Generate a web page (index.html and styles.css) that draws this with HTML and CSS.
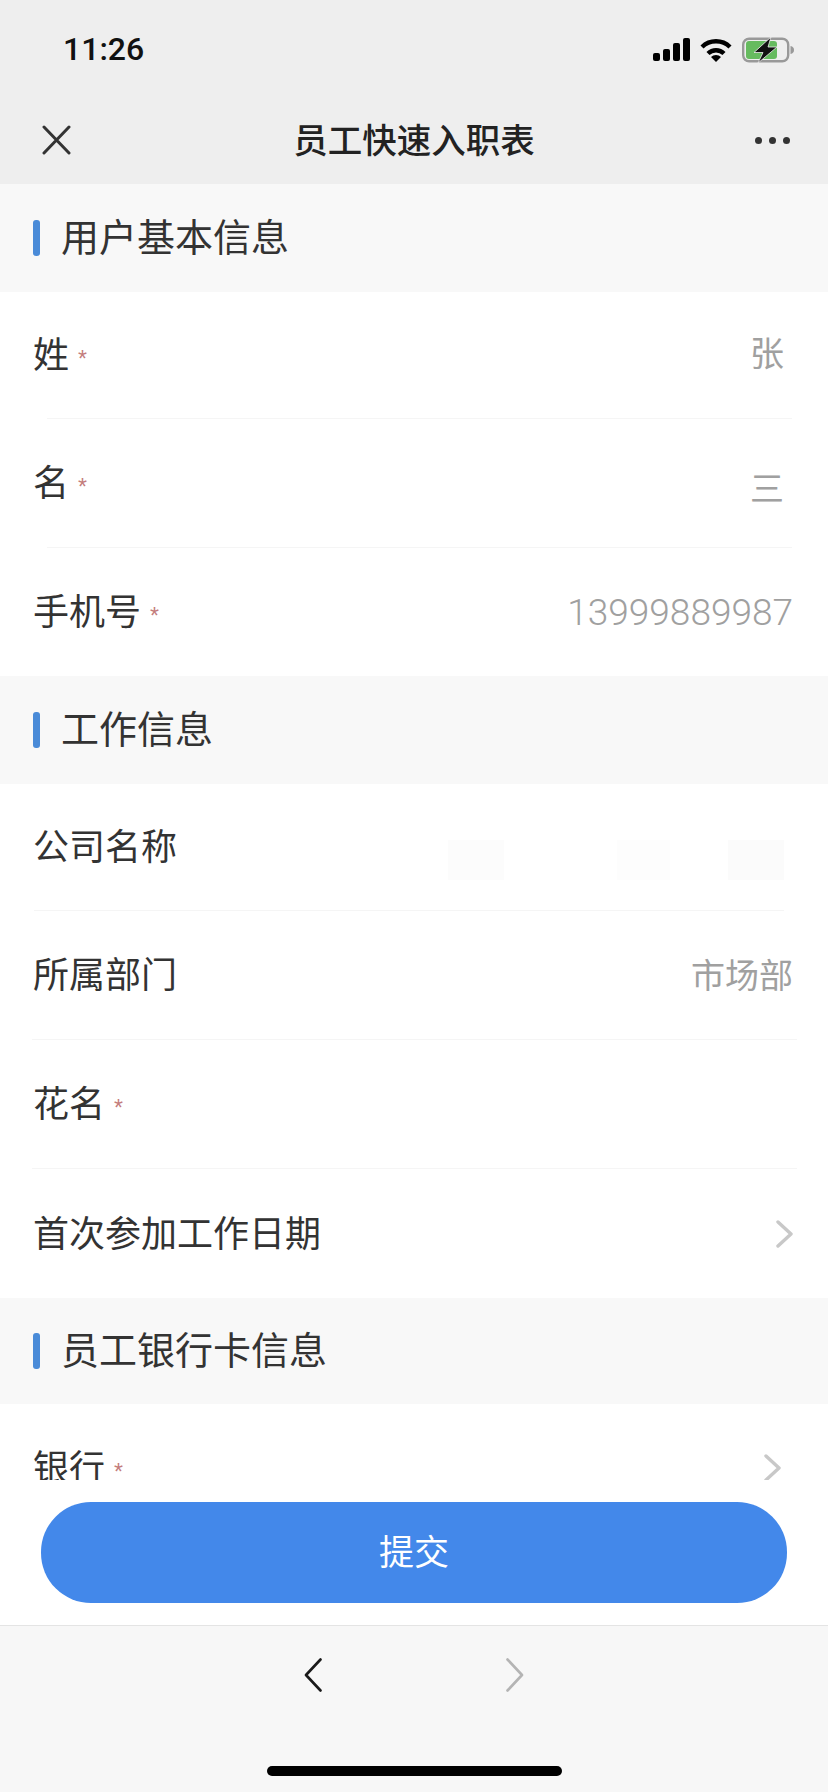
FILE: index.html
```html
<!DOCTYPE html>
<html lang="zh">
<head>
    <meta charset="utf-8">
    <title>员工快速入职表</title>
    <link rel="stylesheet" href="styles.css">
</head>
<body>
    <div class="page">
        <header class="top">
            <div class="status">
                <span class="time">11:26</span>
                <div class="status-icons">
                    <svg class="icon-signal" width="37" height="23" viewBox="0 0 37 23">
                        <rect x="0" y="15" width="7" height="8" rx="2"/>
                        <rect x="10" y="11" width="7" height="12" rx="2"/>
                        <rect x="20" y="5" width="7" height="18" rx="2"/>
                        <rect x="30" y="0" width="7" height="23" rx="2"/>
                    </svg>
                    <svg class="icon-wifi" width="32" height="24" viewBox="0 0 32 24">
                        <path d="M2 9 A20 20 0 0 1 30 9" fill="none" stroke="#000" stroke-width="4.4"/>
                        <path d="M8 15.5 A11.5 11.5 0 0 1 24 15.5" fill="none" stroke="#000" stroke-width="4.4"/>
                        <path d="M16 24 L11 19 A7 7 0 0 1 21 19 Z"/>
                    </svg>
                    <svg class="icon-battery" width="52" height="26" viewBox="0 0 52 26">
                        <rect x="1.2" y="1.7" width="45" height="22.6" rx="6" fill="none" stroke="#999" stroke-width="2.4"/>
                        <path d="M48.5 9 C51 9.5 52 11 52 13 C52 15 51 16.5 48.5 17 Z" fill="#999"/>
                        <rect x="4" y="4" width="31" height="18" rx="3" fill="#66bb5f"/>
                        <path d="M29 0 L12 15.500 H21 L16 26 L35 10 H26 Z" fill="#111" stroke="#eee" stroke-width="0.8"/>
                    </svg>
                </div>
            </div>
            <nav class="nav">
                <div class="nav-left">
                    <svg width="29" height="30" viewBox="0 0 29 30">
                        <path d="M2 2 L27 28 M27 2 L2 28" fill="none" stroke="#333" stroke-width="3" stroke-linecap="round"/>
                    </svg>
                </div>
                <h1 class="nav-title">员工快速入职表</h1>
                <div class="nav-right">
                    <i class="dot"></i><i class="dot"></i><i class="dot"></i>
                </div>
            </nav>
        </header>

        <main class="form">
            <div class="section-head"><i class="bar"></i><span class="section-text">用户基本信息</span></div>
            <section class="card">
                <div class="row">
                    <span class="label">姓<em class="req">*</em></span>
                    <span class="value value-inset">张</span>
                </div>
                <div class="line line-a"></div>
                <div class="row">
                    <span class="label">名<em class="req">*</em></span>
                    <span class="value value-inset value-low">三</span>
                </div>
                <div class="line line-a"></div>
                <div class="row">
                    <span class="label">手机号<em class="req">*</em></span>
                    <span class="value value-num">13999889987</span>
                </div>
            </section>

            <div class="section-head"><i class="bar"></i><span class="section-text">工作信息</span></div>
            <section class="card card-work">
                <div class="row">
                    <span class="label">公司名称</span>
                    <div class="smudges">
                        <i class="smudge smudge-1"></i>
                        <i class="smudge smudge-2"></i>
                        <i class="smudge smudge-3"></i>
                    </div>
                </div>
                <div class="line line-b"></div>
                <div class="row">
                    <span class="label">所属部门</span>
                    <span class="value">市场部</span>
                </div>
                <div class="line line-c"></div>
                <div class="row">
                    <span class="label">花名<em class="req">*</em></span>
                </div>
                <div class="line line-c"></div>
                <div class="row">
                    <span class="label">首次参加工作日期</span>
                    <svg class="chevron" width="17" height="28" viewBox="0 0 17 28">
                        <path d="M2 2 L15 14 L2 26" fill="none" stroke="#c8c8c8" stroke-width="3.4" stroke-linecap="round" stroke-linejoin="round"/>
                    </svg>
                </div>
            </section>

            <div class="section-head section-head-short"><i class="bar"></i><span class="section-text">员工银行卡信息</span></div>
            <section class="card">
                <div class="row row-bank">
                    <span class="label">银行<em class="req">*</em></span>
                    <svg class="chevron chevron-bank" width="17" height="28" viewBox="0 0 17 28">
                        <path d="M2 2 L15 14 L2 26" fill="none" stroke="#c8c8c8" stroke-width="3.4" stroke-linecap="round" stroke-linejoin="round"/>
                    </svg>
                </div>
            </section>
        </main>

        <div class="submit-wrap">
            <button class="submit"><span class="submit-text">提交</span></button>
        </div>

        <footer class="toolbar">
            <div class="toolbar-nav">
                <svg width="18" height="34" viewBox="0 0 18 34">
                    <path d="M16.500 1.500 L2 17 L16.500 32.500" fill="none" stroke="#1a1a1a" stroke-width="2.600" stroke-linecap="round" stroke-linejoin="round"/>
                </svg>
                <svg width="18" height="34" viewBox="0 0 18 34">
                    <path d="M1.500 1.500 L16 17 L1.500 32.500" fill="none" stroke="#b4b4b4" stroke-width="2.600" stroke-linecap="round" stroke-linejoin="round"/>
                </svg>
            </div>
            <div class="home-bar"></div>
        </footer>
    </div>
</body>
</html>
```

FILE: styles.css
```css
* {
    box-sizing: border-box;
}
body {
    margin: 0;
    background-color: white;
    color: #333;
    font-family: "Noto Sans CJK SC", "Liberation Sans", sans-serif;
}
.page {
    display: flex;
    flex-direction: column;
    height: 1792px;
    overflow: hidden;
}

/* status bar and title bar */
.top {
    background-color: #eeeeee;
    height: 184px;
    flex: none;
}
.status {
    display: flex;
    justify-content: space-between;
    align-items: center;
    height: 96px;
    padding: 3px 34px 0 63px;
}
.time {
    margin-bottom: 2px;
    font-family: Roboto, sans-serif;
    font-weight: 500;
    font-size: 32px;
    color: #111;
}
.status-icons {
    display: flex;
    align-items: center;
    gap: 10px;
}
.nav {
    display: grid;
    grid-template-columns: 1fr auto 1fr;
    align-items: center;
    height: 88px;
}
.nav-left {
    display: flex;
    padding-left: 42px;
}
.nav-title {
    margin: 0 0 4px;
    font-size: 34.500px;
    font-weight: 500;
    color: #222;
}
.nav-right {
    display: flex;
    justify-content: flex-end;
    gap: 7px;
    padding-right: 38px;
}
.dot {
    width: 7px;
    height: 7px;
    border-radius: 50%;
    background-color: #333;
}

/* form */
.form {
    height: 1296px;
    flex: none;
    overflow: hidden;
}
.section-head {
    display: flex;
    align-items: center;
    gap: 21px;
    height: 108px;
    padding-left: 33px;
    background-color: #f8f8f8;
    font-size: 38px;
}
.section-head-short {
    height: 106px;
}
.section-text {
    margin-bottom: 8px;
}
.bar {
    width: 7px;
    height: 36px;
    border-radius: 3px;
    background-color: #4a8bd8;
}
.row {
    display: flex;
    justify-content: space-between;
    align-items: center;
    height: 128px;
    padding: 0 35px 0 33px;
}
.row:first-child {
    height: 126px;
}
.card-work .row:last-child {
    height: 129px;
}
.row-bank:first-child {
    height: 128px;
}
.label {
    margin-bottom: 6px;
    font-size: 36px;
}
.req {
    margin-left: 9px;
    font-family: "Liberation Sans", sans-serif;
    font-style: normal;
    font-size: 23px;
    color: #c47c7c;
    vertical-align: 1px;
}
.value {
    margin-bottom: 3px;
    font-size: 34px;
    color: #a0a0a0;
}
.value-inset {
    margin: 0 9px 8px 0;
}
.value-low {
    margin: 6px 9px 0 0;
}
.value-num {
    margin-bottom: 0;
    font-family: Roboto, sans-serif;
    font-weight: 300;
    font-size: 37px;
}
.line {
    height: 1px;
    background-color: #f5f5f5;
}
.line-a {
    margin: 0 36px 0 47px;
}
.line-b {
    margin: 0 44px 0 34px;
}
.line-c {
    margin: 0 31px 0 32px;
}
.smudges {
    display: flex;
    margin: 26px 9px 0 0;
}
.smudge {
    height: 40px;
}
.smudge-1 {
    width: 56px;
    background-color: #fcfcfc;
}
.smudge-2 {
    width: 53px;
    margin-left: 113px;
    background-color: #fdfdfd;
}
.smudge-3 {
    width: 56px;
    margin-left: 58px;
    background-color: #fbfbfb;
}
.chevron-bank {
    margin-right: 12px;
}

/* submit button */
.submit-wrap {
    flex: none;
    padding: 22px 41px;
    background-color: white;
}
.submit {
    display: block;
    width: 100%;
    height: 101px;
    border: none;
    border-radius: 50px;
    background-color: #4388ea;
    color: white;
    font-family: inherit;
    font-size: 35px;
}
.submit-text {
    display: block;
    margin-bottom: 6px;
}

/* bottom bar */
.toolbar {
    flex: 1;
    display: flex;
    flex-direction: column;
    align-items: center;
    padding-top: 32px;
    border-top: 1px solid #e4e4e4;
    background-color: #f7f7f7;
}
.toolbar-nav {
    display: flex;
    gap: 184px;
}
.home-bar {
    width: 295px;
    height: 10px;
    margin-top: 74px;
    border-radius: 5px;
    background-color: black;
}
```
